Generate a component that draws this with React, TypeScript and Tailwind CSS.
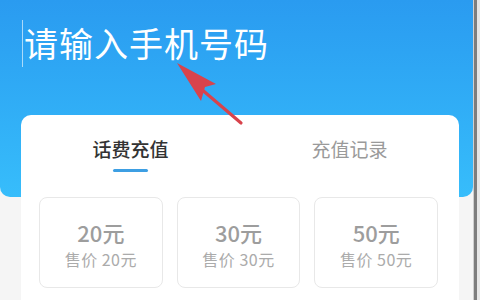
import React from "react";

const font = { fontFamily: '"Noto Sans CJK SC", "Noto Sans", sans-serif' };

function Box({ v }: { v: string }) {
  return (
    <div className="flex-1 h-[91px] border border-[#e8e8e8] rounded-[8px] flex flex-col items-center pt-[22px]">
      <div className="text-[22px] leading-[24px] font-medium text-[#9d9d9d]">{v}元</div>
      <div className="mt-[6px] text-[16px] leading-[18px] tracking-[0.5px] text-[#ababab]">售价 {v}元</div>
    </div>
  );
}

export default function App() {
  return (
    <div className="w-[480px] h-[300px] flex overflow-hidden" style={font}>
      <div className="relative w-[473px] h-[300px] bg-[#f5f5f5] overflow-hidden">
        <div className="h-[197px] rounded-b-[10px] bg-gradient-to-b from-[#2a9bf0] to-[#37bdfb] flex items-start pl-[22px] pt-[20px]">
          <div className="w-px h-[47px] bg-white/60" />
          <div className="ml-[1px] mt-[6px] text-[34px] leading-none tracking-[1px] text-white whitespace-nowrap">
            请输入手机号码
          </div>
        </div>
        <div className="-mt-[82px] ml-[21px] mr-[14px] bg-white rounded-[10px] h-[200px]">
          <div className="flex">
            <div className="flex-1 flex flex-col items-center pt-[24px]">
              <div className="text-[19px] leading-[19px] font-medium text-[#333]">话费充值</div>
              <div className="mt-[11px] w-[35px] h-[3px] rounded-full bg-[#3d9fe3]" />
            </div>
            <div className="flex-1 flex flex-col items-center pt-[24px]">
              <div className="text-[19px] leading-[19px] text-[#9a9a9a]">充值记录</div>
            </div>
          </div>
          <div className="mt-[25px] flex gap-[14px] pl-[18px] pr-[21px]">
            <Box v="20" />
            <Box v="30" />
            <Box v="50" />
          </div>
        </div>
        <svg className="absolute left-0 top-0" width="473" height="300" viewBox="0 0 473 300">
          <line x1="241" y1="123" x2="200" y2="88" stroke="#d8434c" strokeWidth="3.2" strokeLinecap="round" />
          <polygon points="177,63 216,84 205,87 201,101" fill="#d8434c" />
        </svg>
      </div>
      <div className="w-[1px] bg-[#cfcfcf]" />
      <div className="w-[3px] bg-[#7d7d7d]" />
      <div className="w-[3px] bg-[#e6e6e6]" />
    </div>
  );
}
